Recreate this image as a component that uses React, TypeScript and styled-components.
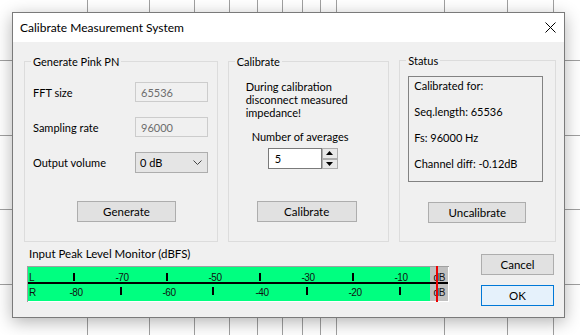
import React from "react";
import styled, { createGlobalStyle } from "styled-components";

const GlobalStyle = createGlobalStyle`
  html, body {
    margin: 0;
    padding: 0;
    background: #fff;
  }
  body {
    font-family: Lato, "Noto Sans", sans-serif;
  }
`;

const GRID_X = [87, 149, 194, 229, 257, 282, 302, 320, 336, 444, 507, 553];
const GRID_Y = [60, 135, 209, 284];

const Desktop = styled.div`
  position: relative;
  width: 580px;
  height: 335px;
  box-sizing: border-box;
  padding: 12px 0 0 12px;
  overflow: hidden;
  background: #fff;
`;

const ChartBehind = styled.svg`
  position: absolute;
  left: 0;
  top: 0;
`;

const Window = styled.div`
  position: relative;
  width: 553px;
  height: 306px;
  box-sizing: border-box;
  border: 1px solid #7a7a7a;
  background: #f0f0f0;
  box-shadow: 0 4px 16px rgba(0, 0, 0, 0.3);
  display: flex;
  flex-direction: column;
  font-size: 11px;
  color: #000;
`;

const TitleBar = styled.div`
  height: 29px;
  flex: none;
  background: #fff;
  display: flex;
  align-items: center;
  justify-content: space-between;
  padding: 0 8px 0 7px;
  font-size: 12px;
`;

const Body = styled.div`
  flex: 1;
  display: flex;
  flex-direction: column;
  padding: 0 8px 0 11px;
`;

const TopRow = styled.div`
  display: flex;
  align-items: flex-end;
  margin-top: 18px;
  gap: 10px;
`;

const Group = styled.div<{ $w: number; $h: number }>`
  position: relative;
  box-sizing: border-box;
  width: ${(p) => p.$w}px;
  height: ${(p) => p.$h}px;
  border: 1px solid #dcdcdc;
  display: flex;
  flex-direction: column;
  align-items: flex-start;
`;

const GroupTitle = styled.span`
  position: absolute;
  top: -8px;
  left: 6px;
  padding: 0 2px;
  line-height: 15px;
  background: #f0f0f0;
`;

const FieldGrid = styled.div`
  display: grid;
  grid-template-columns: 102px 73px;
  grid-auto-rows: 20px;
  row-gap: 15px;
  align-items: center;
  margin: 20px 0 0 8px;
`;

const FieldLabel = styled.span`
  line-height: 15px;
`;

const ReadOnlyBox = styled.div`
  box-sizing: border-box;
  height: 20px;
  border: 1px solid #cccccc;
  background: #f0f0f0;
  color: #6d6d6d;
  padding-left: 5px;
  display: flex;
  align-items: center;
`;

const Combo = styled.div`
  box-sizing: border-box;
  height: 21px;
  border: 1px solid #adadad;
  background: #e5e5e5;
  padding: 0 5px 0 4px;
  display: flex;
  align-items: center;
  justify-content: space-between;
`;

const PushButton = styled.div<{ $w: number; $primary?: boolean }>`
  box-sizing: border-box;
  width: ${(p) => p.$w}px;
  height: 21px;
  border: 1px solid ${(p) => (p.$primary ? "#0078d7" : "#adadad")};
  background: ${(p) => (p.$primary ? "#e5f1fb" : "#e1e1e1")};
  display: flex;
  align-items: center;
  justify-content: center;
  font-size: 11.5px;
`;

const Spaced = styled.div<{ $top: number; $left: number }>`
  margin-top: ${(p) => p.$top}px;
  margin-left: ${(p) => p.$left}px;
`;

const Notice = styled.div`
  line-height: 13px;
  margin: 18px 0 0 17px;
`;

const AvgLabel = styled.div`
  line-height: 15px;
  margin: 10px 0 0 23px;
`;

const Spinner = styled.div`
  display: flex;
  margin: 4px 0 0 39px;
  height: 21px;
`;

const SpinInput = styled.div`
  box-sizing: border-box;
  width: 54px;
  height: 21px;
  border: 1px solid #7a7a7a;
  background: #fff;
  padding-left: 6px;
  display: flex;
  align-items: center;
`;

const SpinButtons = styled.div`
  display: flex;
  flex-direction: column;
  width: 16px;
`;

const SpinArrow = styled.div`
  box-sizing: border-box;
  height: 10.5px;
  border: 1px solid #adadad;
  background: #e8e8e8;
  display: flex;
  align-items: center;
  justify-content: center;
`;

const StatusBox = styled.div`
  box-sizing: border-box;
  width: 135px;
  height: 106px;
  margin: 15px 0 0 8px;
  border: 1px solid #828282;
  padding: 1px 0 0 5px;
  display: flex;
  flex-direction: column;
  gap: 10px;
`;

const StatusLine = styled.div`
  line-height: 16px;
`;

const BottomRow = styled.div`
  display: flex;
  justify-content: space-between;
  padding-right: 2px;
`;

const MonitorColumn = styled.div`
  display: flex;
  flex-direction: column;
  padding-top: 5px;
`;

const MonitorLabel = styled.div`
  line-height: 14px;
  margin-left: 5px;
  font-size: 11.5px;
`;

const MeterSvg = styled.svg`
  display: block;
  margin: 5px 0 0 3px;
`;

const DialogButtons = styled.div`
  display: flex;
  flex-direction: column;
  gap: 10px;
  padding-top: 12px;
`;

const CloseIcon = () => (
  <svg width="11" height="11" viewBox="0 0 11 11">
    <path d="M0.5 0.5 L10.5 10.5 M10.5 0.5 L0.5 10.5" stroke="#000" strokeWidth="1" />
  </svg>
);

const Chevron = () => (
  <svg width="9" height="5" viewBox="0 0 9 5">
    <polyline points="0.5,0.5 4.5,4.5 8.5,0.5" fill="none" stroke="#444" strokeWidth="1" />
  </svg>
);

const Tri = ({ up }: { up?: boolean }) => (
  <svg width="7" height="4" viewBox="0 0 7 4">
    <polygon points={up ? "0,4 7,4 3.5,0" : "0,0 7,0 3.5,4"} fill="#000" />
  </svg>
);

const dbX = (v: number) => 419 + v * 4.65;

const Meter = () => {
  const lTicks = [-80, -60, -40, -20];
  const lLabels = [-70, -50, -30, -10];
  const rTicks = [-70, -50, -30, -10];
  const rLabels = [-80, -60, -40, -20];
  const txt = { fontFamily: '"Liberation Sans", Arial, sans-serif', fontSize: 10, fill: "#111" };
  return (
    <MeterSvg width="422" height="36" viewBox="0 0 422 36">
      <rect x="0" y="0" width="422" height="36" fill="#a0a0a0" />
      <rect x="1" y="1" width="421" height="35" fill="#fff" />
      <rect x="1" y="1" width="420" height="34" fill="#c0c0c0" />
      <rect x="1" y="1" width="402" height="34" fill="#00ff80" />
      <rect x="1" y="16" width="420" height="2" fill="#000" />
      {lTicks.map((v) => (
        <rect key={"lt" + v} x={Math.round(dbX(v)) - 1} y="7" width="2" height="8" fill="#000" />
      ))}
      {rTicks.map((v) => (
        <rect key={"rt" + v} x={Math.round(dbX(v)) - 1} y="21" width="2" height="8" fill="#000" />
      ))}
      {lLabels.map((v) => (
        <text key={"ll" + v} x={dbX(v) + 1.5} y="14.5" textAnchor="middle" letterSpacing="-0.5" {...txt}>
          {v}
        </text>
      ))}
      {rLabels.map((v) => (
        <text key={"rl" + v} x={dbX(v) + 2} y="29.5" textAnchor="middle" letterSpacing="-0.5" {...txt}>
          {v}
        </text>
      ))}
      <text x="2" y="14.5" {...txt}>L</text>
      <text x="2" y="29.5" {...txt}>R</text>
      <text x="406.5" y="14.5" letterSpacing="-0.3" {...txt}>dB</text>
      <text x="406.5" y="29.5" letterSpacing="-0.3" {...txt}>dB</text>
      <rect x="409" y="0" width="2" height="36" fill="#ee0000" />
    </MeterSvg>
  );
};

export default function App() {
  return (
    <>
      <GlobalStyle />
      <Desktop>
        <ChartBehind width="580" height="335">
          {GRID_X.map((x) => (
            <line key={"x" + x} x1={x + 0.5} y1="0" x2={x + 0.5} y2="335" stroke="#a0a0a0" />
          ))}
          {GRID_Y.map((y) => (
            <line key={"y" + y} x1="0" y1={y + 0.5} x2="580" y2={y + 0.5} stroke="#a0a0a0" />
          ))}
        </ChartBehind>
        <Window>
          <TitleBar>
            <span>Calibrate Measurement System</span>
            <CloseIcon />
          </TitleBar>
          <Body>
            <TopRow>
              <Group $w={194} $h={181}>
                <GroupTitle>Generate Pink PN</GroupTitle>
                <FieldGrid>
                  <FieldLabel>FFT size</FieldLabel>
                  <ReadOnlyBox>65536</ReadOnlyBox>
                  <FieldLabel>Sampling rate</FieldLabel>
                  <ReadOnlyBox>96000</ReadOnlyBox>
                  <FieldLabel>Output volume</FieldLabel>
                  <Combo>
                    <span>0 dB</span>
                    <Chevron />
                  </Combo>
                </FieldGrid>
                <Spaced $top={29} $left={52}>
                  <PushButton $w={99}>Generate</PushButton>
                </Spaced>
              </Group>
              <Group $w={162} $h={181} style={{ marginLeft: 0 }}>
                <GroupTitle>Calibrate</GroupTitle>
                <Notice>
                  During calibration
                  <br />
                  disconnect measured
                  <br />
                  impedance!
                </Notice>
                <AvgLabel>Number of averages</AvgLabel>
                <Spinner>
                  <SpinInput>5</SpinInput>
                  <SpinButtons>
                    <SpinArrow>
                      <Tri up />
                    </SpinArrow>
                    <SpinArrow>
                      <Tri />
                    </SpinArrow>
                  </SpinButtons>
                </Spinner>
                <Spaced $top={32} $left={28}>
                  <PushButton $w={100}>Calibrate</PushButton>
                </Spaced>
              </Group>
              <Group $w={157} $h={182}>
                <GroupTitle>Status</GroupTitle>
                <StatusBox>
                  <StatusLine>Calibrated for:</StatusLine>
                  <StatusLine>Seq.length: 65536</StatusLine>
                  <StatusLine>Fs: 96000 Hz</StatusLine>
                  <StatusLine>Channel diff: -0.12dB</StatusLine>
                </StatusBox>
                <Spaced $top={20} $left={28}>
                  <PushButton $w={98}>Uncalibrate</PushButton>
                </Spaced>
              </Group>
            </TopRow>
            <BottomRow>
              <MonitorColumn>
                <MonitorLabel>Input Peak Level Monitor (dBFS)</MonitorLabel>
                <Meter />
              </MonitorColumn>
              <DialogButtons>
                <PushButton $w={73}>Cancel</PushButton>
                <PushButton $w={73} $primary>
                  OK
                </PushButton>
              </DialogButtons>
            </BottomRow>
          </Body>
        </Window>
      </Desktop>
    </>
  );
}
